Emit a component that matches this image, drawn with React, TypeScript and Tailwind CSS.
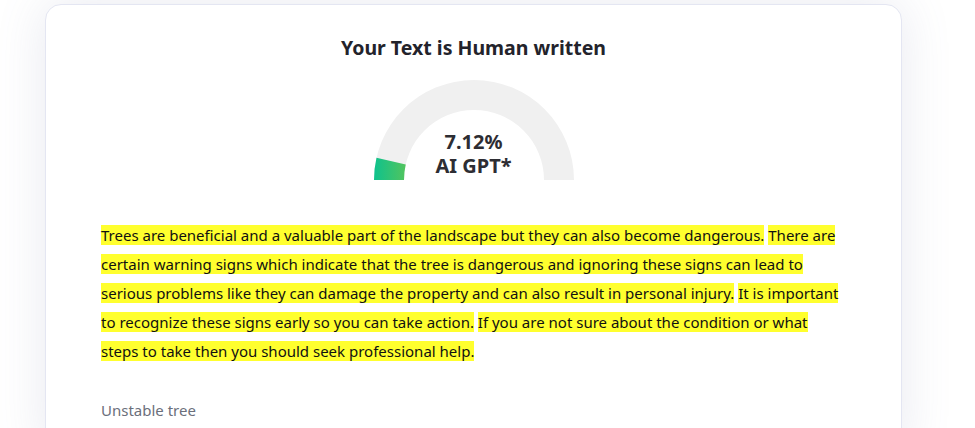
const sentences = [
  "Trees are beneficial and a valuable part of the landscape but they can also become dangerous.",
  "There are certain warning signs which indicate that the tree is dangerous and ignoring these signs can lead to serious problems like they can damage the property and can also result in personal injury.",
  "It is important to recognize these signs early so you can take action.",
  "If you are not sure about the condition or what steps to take then you should seek professional help.",
];

function Gauge({ percent }: { percent: number }) {
  const cx = 100;
  const cy = 100;
  const ro = 100;
  const ri = 70;
  const a = Math.PI - (percent / 100) * Math.PI;
  const ox = cx + ro * Math.cos(a);
  const oy = cy - ro * Math.sin(a);
  const ix = cx + ri * Math.cos(a);
  const iy = cy - ri * Math.sin(a);

  return (
    <div className="relative w-[200px] h-[100px]">
      <svg width="200" height="100" viewBox="0 0 200 100">
        <defs>
          <linearGradient id="g" x1="0" y1="0" x2="1" y2="0">
            <stop offset="0%" stopColor="#0ec28d" />
            <stop offset="100%" stopColor="#52c45e" />
          </linearGradient>
        </defs>
        <path d="M0 100 A100 100 0 0 1 200 100 L170 100 A70 70 0 0 0 30 100 Z" fill="#f0f0f0" />
        <path
          d={`M0 100 A100 100 0 0 1 ${ox} ${oy} L${ix} ${iy} A70 70 0 0 0 30 100 Z`}
          fill="url(#g)"
        />
      </svg>
      <div className="absolute inset-x-0 top-[50px] flex flex-col items-center text-[20px] font-bold leading-[24px] text-[#2d2d33]">
        <span>{percent}%</span>
        <span>AI GPT*</span>
      </div>
    </div>
  );
}

export default function App() {
  return (
    <div
      className="min-h-[428px] bg-white pt-1 pl-[45px] pr-[73px] text-black"
      style={{ fontFamily: '"Noto Sans", "Open Sans", sans-serif' }}
    >
      <div className="rounded-2xl border border-[#e4e6f2] bg-white pt-[29px] px-[55px] pb-8 shadow-[0_0_50px_rgba(110,120,160,0.16)]">
        <h2 className="text-center text-[19.5px] font-bold leading-[28px] text-[#23232b]">
          Your Text is Human written
        </h2>
        <div className="mt-[18px] flex justify-center">
          <Gauge percent={7.12} />
        </div>
        <p className="mt-[41px] text-[15px] leading-[29px] text-[#111]">
          {sentences.map((s, i) => (
            <span key={i}>
              <span className="bg-[#ffff2e]">{s}</span>
              {i < sentences.length - 1 ? " " : ""}
            </span>
          ))}
        </p>
        <p className="mt-[33px] text-[15px] text-[#6b6f7b]">Unstable tree</p>
      </div>
    </div>
  );
}
